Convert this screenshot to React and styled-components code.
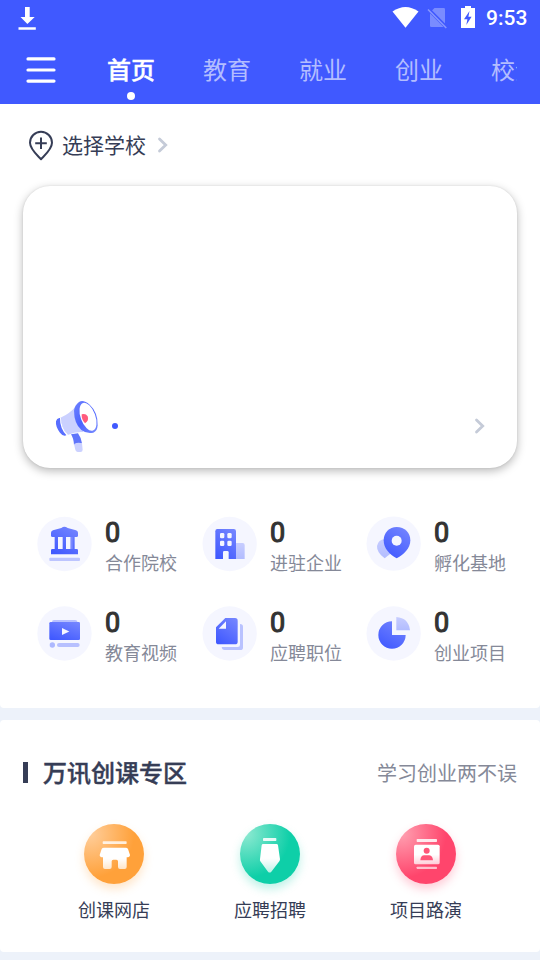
import React from "react";
import styled, { createGlobalStyle } from "styled-components";

const GlobalStyle = createGlobalStyle`
  * {
    box-sizing: border-box;
  }
  body {
    margin: 0;
    background: #edf2fa;
    font-family: Roboto, "Noto Sans CJK SC", sans-serif;
    color: #363d56;
  }
  svg {
    display: block;
    flex-shrink: 0;
  }
`;

const tabs = ["首页", "教育", "就业", "创业", "校企"];

const StatusIcons = () => (
  <svg width="90" height="36" viewBox="390 0 90 36">
    <path d="M392.5 11.5 Q405.5 2.5 418.5 11.5 L405.5 27.8Z" fill="#fff" />
    <path d="M434.5 8h9.3q1.2 0 1.2 1.2v16.6q0 1.2-1.2 1.2h-12.6q-1.2 0-1.2-1.2V12.5z" fill="#7a8cff" />
    <path d="M428 8.8 447 28" stroke="#4059ff" strokeWidth="3.5" />
    <path d="M428 9.5 446.3 28" stroke="#8797ff" strokeWidth="1.5" />
    <path d="M465 6h6v2h4v20h-14V8h4z" fill="#fff" />
    <path d="M469.5 11 464 19.3h3.4L466.3 25l5.3-8.2h-3.2z" fill="#4059ff" />
  </svg>
);

const Chevron = () => (
  <svg width="12" height="18" viewBox="0 0 12 18">
    <path d="M2.5 3 8.7 9 2.5 15" fill="none" stroke="#c5cbd8" strokeWidth="2.8" strokeLinecap="round" />
  </svg>
);

const Megaphone = () => (
  <svg width="50" height="56" viewBox="126 54 150 168">
    <defs>
      <linearGradient id="horn" x1="0" y1="0" x2="1" y2="1">
        <stop offset="0" stopColor="#6f83ff" />
        <stop offset=".5" stopColor="#4c63ff" />
        <stop offset="1" stopColor="#7a8eff" />
      </linearGradient>
    </defs>
    <path d="M183 163 L204 160 Q214 174 216 190 L192 195 Q191 175 183 163Z" fill="#6075fb" />
    <path d="M192 192 Q204 186 216 190 L218 209 Q218 216 211 216 L203 216 Q197 215 196 209Z" fill="#cbd1ff" />
    <path d="M148 114 L156 113 L170 165 Q160 171 150 158 Q136 140 138 124 Q140 115 148 114Z" fill="#586eff" />
    <path d="M154 112 Q178 102 198 79 L220 156 Q196 154 173 165 Q151 142 154 112Z" fill="#cbd1ff" />
    <path d="M152 113 Q151 144 172 166" fill="none" stroke="#fff" strokeWidth="4" />
    <path
      d="M207 66 Q220 58 239 74 Q264 97 263 136 Q262 154 250 158 Q229 162 214 150 Q192 129 192 92 Q193 77 207 66Z"
      fill="url(#horn)"
    />
    <ellipse cx="234" cy="110" rx="22" ry="44" transform="rotate(-20 234 110)" fill="#fff" />
    <path d="M215 103 Q227 99 233 109 Q238 122 225 130 Q214 119 215 103Z" fill="#ff5b7d" />
  </svg>
);

const Gradients = () => (
  <svg width="0" height="0" style={{ position: "absolute" }}>
    <defs>
      <linearGradient id="deep" x1=".8" y1="0" x2=".2" y2="1">
        <stop offset="0" stopColor="#7384ff" />
        <stop offset="1" stopColor="#4059ff" />
      </linearGradient>
      <linearGradient id="pale" x1="0" y1="0" x2="0" y2="1">
        <stop offset="0" stopColor="#c7cdff" />
        <stop offset="1" stopColor="#b2bcff" />
      </linearGradient>
      <linearGradient id="fade" x1="0" y1="0" x2="0" y2="1">
        <stop offset=".5" stopColor="#fff" />
        <stop offset="1" stopColor="#fff" stopOpacity=".72" />
      </linearGradient>
    </defs>
  </svg>
);

const stats = [
  {
    label: "合作院校",
    box: "51 48 168 168",
    cx: 133.5,
    cy: 132,
    icon: (
      <>
        <path
          d="M133 80 Q138 80 143 84 L168 91 Q174 93 174 98 V107 Q174 111 169 111 H164 V147 H170 Q174 147 174 151 V163 H93 V151 Q93 147 97 147 H104 V111 H98 Q93 111 93 107 V98 Q93 93 99 91 L124 84 Q129 80 133 80Z M114 111V147H128V111Z M138 111V147H152V111Z"
          fill="url(#deep)"
          fillRule="evenodd"
        />
        <path d="M155 111v36" stroke="#7b8aff" strokeWidth="6" />
        <rect x="88" y="173" width="92" height="10" rx="3" fill="#bdc5ff" />
      </>
    ),
  },
  {
    label: "进驻企业",
    box: "36 48 168 168",
    cx: 119,
    cy: 132,
    icon: (
      <>
        <path d="M136 129H158Q164 129 164 135V177H136Z" fill="url(#pale)" />
        <path d="M82 87H131Q138 87 138 94V177H76V94Q76 87 82 87Z" fill="url(#deep)" />
        <g fill="#f5f6ff">
          <rect x="90" y="99" width="13" height="16" rx="4" />
          <rect x="112" y="99" width="13" height="16" rx="4" />
          <rect x="90" y="122" width="13" height="16" rx="4" />
          <rect x="112" y="122" width="13" height="16" rx="4" />
          <path d="M99 178V157q0-4 4-4h9q4 0 4 4v21z" />
        </g>
      </>
    ),
  },
  {
    label: "孵化基地",
    box: "48 48 168 168",
    cx: 131,
    cy: 131,
    icon: (
      <>
        <path d="M104 175 Q80 158 81 138 Q85 119 104 117 L125 158Z" fill="url(#pale)" />
        <path
          d="M140 81 C164 81 181 98 181 121 C181 146 162 163 140 175 C118 163 101 146 101 121 C101 98 118 81 140 81Z"
          fill="url(#deep)"
        />
        <circle cx="140" cy="122" r="15" fill="#f5f6ff" />
      </>
    ),
  },
  {
    label: "教育视频",
    box: "51 318 168 168",
    cx: 133.5,
    cy: 400.5,
    icon: (
      <>
        <path d="M96 368v-3q0-5 6-5h63q7 0 7 5v3z" fill="#b7c0ff" />
        <rect x="88" y="366" width="92" height="54" rx="4" fill="url(#deep)" />
        <path d="M126 384v21l22-10.500z" fill="#f5f6ff" />
        <circle cx="97" cy="435" r="8" fill="#adb8ff" />
        <rect x="111" y="429" width="68" height="12" rx="6" fill="#b7c0ff" />
      </>
    ),
  },
  {
    label: "应聘职位",
    box: "36 318 168 168",
    cx: 119,
    cy: 400.5,
    icon: (
      <>
        <path d="M150 372Q159 372 159 380V443Q159 450 151 450H104Q96 450 95 441H143Q150 441 150 434Z" fill="#b9c2ff" />
        <path d="M106 354H135Q143 354 143 362V425Q143 433 135 433H86Q78 433 78 425V382Z" fill="url(#deep)" />
        <path d="M108 364V386H86Z" fill="#f5f6ff" />
      </>
    ),
  },
  {
    label: "创业项目",
    box: "48 318 168 168",
    cx: 131,
    cy: 400.5,
    icon: (
      <>
        <path d="M126 364V405H167A41 41 0 1 1 126 364Z" fill="url(#deep)" />
        <path d="M139 351Q176 354 180 391H139Z" fill="url(#pale)" />
      </>
    ),
  },
];

const courses = [
  {
    label: "创课网店",
    box: "72 42 180 180",
    from: "#ffce9b",
    to: "#ffa13a",
    icon: (
      <>
        <rect x="128" y="94" width="72" height="8" rx="2" fill="#fff" opacity=".8" />
        <path
          d="M132 113H197Q202 113 204 117L210 135Q210 142 200 142V171Q200 177 194 177H180Q174 177 174 171V154Q174 149 169 149H160Q155 149 155 154V171Q155 177 149 177H135Q129 177 129 171V142Q119 142 119 135L125 117Q127 113 132 113Z"
          fill="url(#fade)"
        />
      </>
    ),
  },
  {
    label: "应聘招聘",
    box: "540 42 180 180",
    from: "#8de9d1",
    to: "#0ecfa8",
    icon: (
      <>
        <rect x="609" y="84" width="40" height="9" rx="2" fill="#fff" opacity=".88" />
        <path d="M609 102H650Q653 102 654 106L660 148Q660 151 658 154L634 185Q629 190 624 185L601 154Q599 151 600 148L605 106Q606 102 609 102Z" fill="url(#fade)" />
      </>
    ),
  },
  {
    label: "项目路演",
    box: "288 252 180 180",
    from: "#ff9fb0",
    to: "#ff456c",
    icon: (
      <>
        <rect x="350" y="297" width="61" height="9" rx="2" fill="#fff" opacity=".85" />
        <rect x="342" y="314" width="77" height="59" rx="5" fill="url(#fade)" />
        <rect x="350" y="380" width="61" height="7" rx="2" fill="#fff" opacity=".65" />
        <circle cx="380" cy="332" r="9" fill="#ff5578" />
        <path d="M361 361Q362 346 373 346H388Q398 347 399 361Z" fill="#ff5578" />
      </>
    ),
  },
];

export default function App() {
  return (
    <Page>
      <GlobalStyle />
      <Gradients />
      <Header>
        <StatusBar>
          <svg width="18" height="36" viewBox="18 0 18 36">
            <path d="M25 7h4.700v10h5L27.400 24 20.500 17H25zM18.500 27.300h17.300v2.500H18.500z" fill="#fff" />
          </svg>
          <StatusRight>
            <StatusIcons />
            <Clock>9:53</Clock>
          </StatusRight>
        </StatusBar>
        <NavBar>
          <svg width="30" height="28" viewBox="0 0 30 28">
            <path d="M2 2.900h26M2 14h26M2 25.100h26" stroke="#fff" strokeWidth="3.200" strokeLinecap="round" />
          </svg>
          <Tabs>
            {tabs.map((tab, i) => (
              <Tab key={tab} $active={i === 0}>
                {tab}
              </Tab>
            ))}
          </Tabs>
        </NavBar>
      </Header>

      <Overview>
        <School>
          <svg width="26" height="32" viewBox="0 0 26 32">
            <path d="M13 29.300 C8.500 24.500 2 19 2 12.800 A11 11 0 0 1 24 12.800 C24 19 17.500 24.500 13 29.300Z" fill="none" stroke="#363d56" strokeWidth="2" strokeLinejoin="round" />
            <path d="M13 7.500v11.500M7.200 13.300h11.600" stroke="#363d56" strokeWidth="2" />
          </svg>
          <SchoolName>选择学校</SchoolName>
          <Chevron />
        </School>
        <Banner>
          <Notice>
            <Megaphone />
            <Dot />
            <Chevron />
          </Notice>
        </Banner>
        <Stats>
          {stats.map((s) => (
            <Stat key={s.label}>
              <svg width="56" height="56" viewBox={s.box}>
                <circle cx={s.cx} cy={s.cy} r="81.5" fill="#f5f6ff" />
                {s.icon}
              </svg>
              <div>
                <Count>0</Count>
                <StatLabel>{s.label}</StatLabel>
              </div>
            </Stat>
          ))}
        </Stats>
      </Overview>

      <Zone>
        <ZoneHead>
          <ZoneTitle>万讯创课专区</ZoneTitle>
          <ZoneHint>学习创业两不误</ZoneHint>
        </ZoneHead>
        <Courses>
          {courses.map((c) => (
            <Course key={c.label}>
              <Badge $from={c.from} $to={c.to}>
                <svg width="60" height="60" viewBox={c.box}>
                  {c.icon}
                </svg>
              </Badge>
              {c.label}
            </Course>
          ))}
        </Courses>
      </Zone>
    </Page>
  );
}

const Page = styled.div`
  width: 540px;
  height: 960px;
  overflow: hidden;
  background: #edf2fa;
`;

const Header = styled.header`
  height: 104px;
  background: #4059ff;
  color: #fff;
`;

const StatusBar = styled.div`
  display: flex;
  justify-content: space-between;
  height: 36px;
  padding: 0 12px 0 18px;
`;

const StatusRight = styled.div`
  display: flex;
  align-items: center;
`;

const Clock = styled.span`
  width: 48px;
  padding: 1px 0 0 6px;
  font-size: 21px;
  font-weight: 500;
  line-height: 37px;
`;

const NavBar = styled.nav`
  display: flex;
  height: 68px;
  padding: 20px 23px 0 26px;
`;

const Tabs = styled.div`
  display: flex;
  flex: 1;
  gap: 48px;
  height: 48px;
  margin-left: 51px;
  overflow: hidden;
`;

const Tab = styled.div`
  flex: none;
  width: 48px;
  height: 48px;
  font-size: 24px;
  line-height: 31px;
  white-space: nowrap;
  color: ${(p) => (p.$active ? "#fff" : "#b3bdff")};
  font-weight: ${(p) => (p.$active ? 500 : 400)};
  -webkit-text-stroke: ${(p) => (p.$active ? "0.4px" : "0")};
  &::after {
    content: "";
    display: ${(p) => (p.$active ? "block" : "none")};
    width: 8px;
    height: 8px;
    margin: 5px auto 0;
    border-radius: 50%;
    background: #fff;
  }
`;

const Overview = styled.main`
  height: 604px;
  background: #fff;
  border-radius: 0 0 4px 4px;
`;

const School = styled.div`
  display: flex;
  align-items: center;
  height: 82px;
  padding: 2px 0 0 28px;
  > :last-child {
    margin-bottom: 2px;
  }
`;

const SchoolName = styled.span`
  margin: 0 11px 0 8px;
  font-size: 21px;
  line-height: 30px;
`;

const Banner = styled.section`
  display: flex;
  align-items: flex-end;
  height: 282px;
  margin: 0 23px;
  border-radius: 27px;
  background: #fff;
  box-shadow: 0 3px 10px rgba(0, 0, 0, 0.28), 0 0 2px rgba(0, 0, 0, 0.1);
`;

const Notice = styled.div`
  display: flex;
  align-items: center;
  width: 100%;
  padding: 0 31px 14px 29px;
  > :last-child {
    margin-left: auto;
  }
`;

const Dot = styled.i`
  width: 6px;
  height: 6px;
  margin-left: 10px;
  border-radius: 50%;
  background: #4059ff;
`;

const Stats = styled.section`
  display: grid;
  grid-template-columns: 165px 164px 160px;
  grid-auto-rows: 90px;
  padding: 48px 0 0 37px;
`;

const Stat = styled.div`
  display: flex;
  gap: 12px;
`;

const Count = styled.div`
  height: 35px;
  font-size: 27px;
  line-height: 34px;
  color: #333;
  -webkit-text-stroke: 1.1px #333;
`;

const StatLabel = styled.div`
  font-size: 18px;
  line-height: 26px;
  color: #858998;
`;

const Zone = styled.section`
  height: 232px;
  margin-top: 12px;
  padding-top: 33px;
  border-radius: 4px;
  background: #fff;
`;

const ZoneHead = styled.div`
  display: flex;
  align-items: center;
  justify-content: space-between;
  height: 38px;
  padding: 0 23px;
`;

const ZoneTitle = styled.h2`
  display: flex;
  align-items: center;
  gap: 15px;
  margin: 4px 0 0;
  font-size: 24px;
  line-height: 34px;
  font-weight: 500;
  -webkit-text-stroke: 0.4px;
  &::before {
    content: "";
    width: 5px;
    height: 21px;
    margin-bottom: 4px;
    background: #363d56;
  }
`;

const ZoneHint = styled.span`
  margin-top: 3px;
  font-size: 20px;
  line-height: 30px;
  color: #858998;
`;

const Courses = styled.div`
  display: grid;
  grid-template-columns: repeat(3, 156px);
  padding: 33px 36px 0;
`;

const Course = styled.div`
  display: flex;
  flex-direction: column;
  align-items: center;
  gap: 14px;
  font-size: 18px;
  line-height: 26px;
`;

const Badge = styled.div`
  width: 60px;
  height: 60px;
  border-radius: 50%;
  background: ${(p) => `radial-gradient(circle at 10% 16%, ${p.$from}, ${p.$to} 60%)`};
  box-shadow: 0 5px 10px ${(p) => p.$to}44;
`;
